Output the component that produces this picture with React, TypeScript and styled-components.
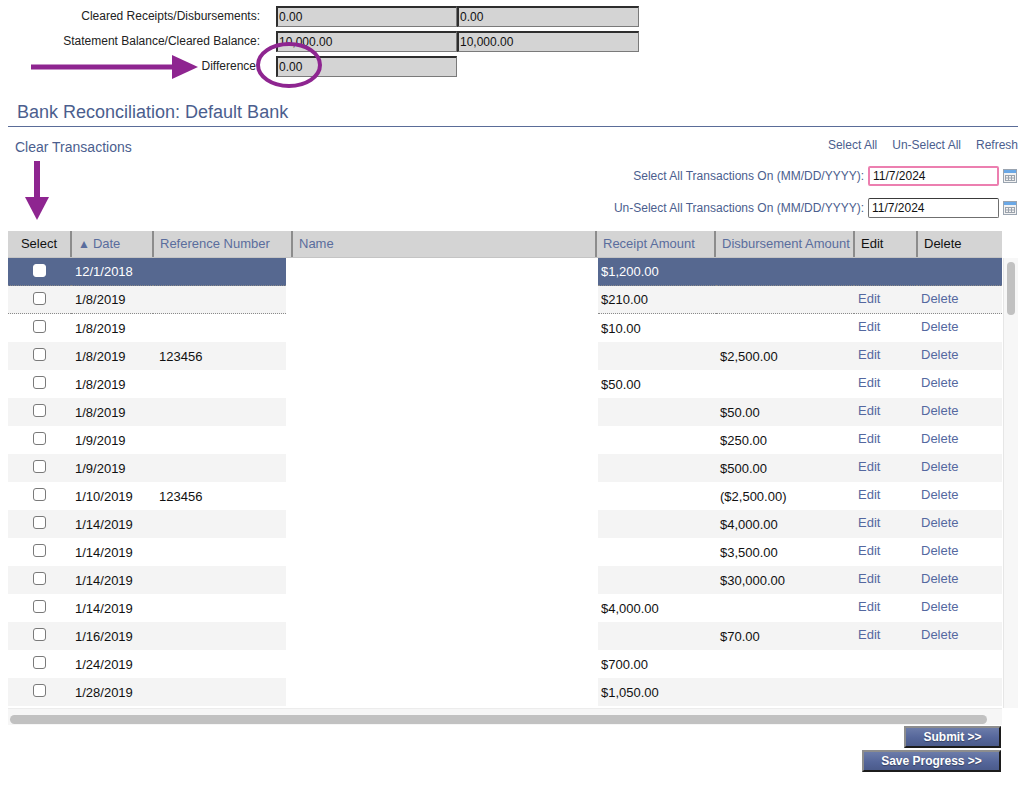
import styled, { createGlobalStyle } from "styled-components";

type Txn = {
  date: string;
  ref?: string;
  receipt?: string;
  disb?: string;
  actions?: boolean;
};

const rows: Txn[] = [
  { date: "12/1/2018", receipt: "$1,200.00" },
  { date: "1/8/2019", receipt: "$210.00", actions: true },
  { date: "1/8/2019", receipt: "$10.00", actions: true },
  { date: "1/8/2019", ref: "123456", disb: "$2,500.00", actions: true },
  { date: "1/8/2019", receipt: "$50.00", actions: true },
  { date: "1/8/2019", disb: "$50.00", actions: true },
  { date: "1/9/2019", disb: "$250.00", actions: true },
  { date: "1/9/2019", disb: "$500.00", actions: true },
  { date: "1/10/2019", ref: "123456", disb: "($2,500.00)", actions: true },
  { date: "1/14/2019", disb: "$4,000.00", actions: true },
  { date: "1/14/2019", disb: "$3,500.00", actions: true },
  { date: "1/14/2019", disb: "$30,000.00", actions: true },
  { date: "1/14/2019", receipt: "$4,000.00", actions: true },
  { date: "1/16/2019", disb: "$70.00", actions: true },
  { date: "1/24/2019", receipt: "$700.00" },
  { date: "1/28/2019", receipt: "$1,050.00" },
];

const GlobalStyle = createGlobalStyle`
  body {
    margin: 0;
    background: #ffffff;
    font-family: "Liberation Sans", Arial, sans-serif;
    font-size: 12px;
    color: #111;
  }
`;

const Page = styled.div`
  position: relative;
  width: 1010px;
  padding: 6px 6px 0 8px;
`;

// Summary (top fields)
const Summary = styled.div`
  display: grid;
  grid-template-columns: 268px 181px 182px;
  row-gap: 4px;
`;

const SummaryLabel = styled.div<{ $pad?: number }>`
  text-align: right;
  padding-right: ${(p) => p.$pad ?? 16}px;
  line-height: 21px;
  font-size: 12px;
  color: #222;
`;

const Field = styled.div`
  box-sizing: border-box;
  height: 21px;
  background: #d4d4d4;
  border: 1px solid #7a7a7a;
  border-top: 2px solid #2e2e2e;
  border-left: 2px solid #2e2e2e;
  padding-left: 1px;
  line-height: 18px;
  font-size: 12px;
  color: #111;
`;

const Heading = styled.h2`
  margin: 23px 0 0 0;
  padding: 1px 0 3px 9px;
  font-size: 18px;
  font-weight: normal;
  line-height: 22px;
  color: #4b5e8e;
  border-bottom: 1px solid #5a6c98;
`;

// Toolbar
const Toolbar = styled.div`
  display: flex;
  justify-content: space-between;
  align-items: flex-start;
`;

const SectionTitle = styled.div`
  padding: 12px 0 0 7px;
  font-size: 14px;
  line-height: 16px;
  color: #4b5e8e;
`;

const ToolActions = styled.div`
  display: flex;
  flex-direction: column;
  align-items: flex-end;
  padding-top: 11px;
`;

const Links = styled.div`
  display: flex;
  gap: 15px;
  line-height: 14px;
  margin-bottom: 14px;
`;

const Link = styled.a`
  color: #4b5e8e;
  font-size: 12px;
  text-decoration: none;
  cursor: pointer;
`;

const DateRow = styled.div`
  display: flex;
  align-items: center;
  height: 20px;
  margin-bottom: 12px;
  padding-right: 1px;
`;

const DateLabel = styled.span`
  color: #4b5e8e;
  font-size: 12px;
  margin-right: 4px;
`;

const DateInput = styled.div<{ $focused?: boolean }>`
  box-sizing: border-box;
  width: 131px;
  height: 20px;
  padding-left: 3px;
  line-height: ${(p) => (p.$focused ? "16px" : "18px")};
  font-size: 12px;
  color: #111;
  border-radius: 2px;
  border: ${(p) => (p.$focused ? "2px solid #ec7fb0" : "1px solid #6f6f6f")};
  border-top-color: ${(p) => (p.$focused ? "#ec7fb0" : "#3a3a3a")};
`;

const CalButton = styled.span`
  display: inline-flex;
  margin-left: 4px;
`;

// Grid
const Grid = styled.div`
  margin-top: 1px;
`;

const HeaderRow = styled.div`
  display: grid;
  grid-template-columns: 62px 82px 139px 304px 119px 139px 63px 86px;
  width: 994px;
  height: 27px;
  background: #d4d4d4;
  border-bottom: 1px solid #c4c4c4;
  box-sizing: border-box;
`;

const HeadCell = styled.div<{ $sortable?: boolean; $first?: boolean; $center?: boolean }>`
  font-size: 13px;
  line-height: 26px;
  white-space: nowrap;
  overflow: hidden;
  color: ${(p) => (p.$sortable ? "#5a6d9d" : "#111")};
  border-left: ${(p) => (p.$first ? "none" : "2px solid #8c8c8c")};
  padding-left: ${(p) => (p.$center ? "0" : "6px")};
  text-align: ${(p) => (p.$center ? "center" : "left")};
`;

const Arrow = styled.span`
  font-size: 12px;
  margin-right: 3px;
`;

const BodyWrap = styled.div`
  display: flex;
  gap: 1px;
  height: 450px;
  overflow: hidden;
`;

const Rows = styled.div`
  width: 994px;
`;

const Row = styled.div`
  display: grid;
  grid-template-columns: 63px 82px 133px 312px 118px 138px 63px 85px;
  height: 28px;
`;

const Cell = styled.div<{ $tone: "sel" | "alt" | "plain"; $dotted?: boolean; $blank?: boolean; $pad?: number }>`
  box-sizing: border-box;
  display: flex;
  align-items: center;
  font-size: 13px;
  white-space: nowrap;
  padding-left: ${(p) => p.$pad ?? 4}px;
  background: ${(p) =>
    p.$blank ? "#fff" : p.$tone === "sel" ? "#566890" : p.$tone === "alt" ? "#f4f4f4" : "#fff"};
  color: ${(p) => (p.$tone === "sel" ? "#fff" : "#111")};
  border-bottom: ${(p) => (p.$dotted && !p.$blank ? "1px dotted #8a8a8a" : "none")};
`;

const CheckCell = styled(Cell)`
  justify-content: center;
  padding-left: 0;
`;

const Check = styled.span<{ $sel?: boolean }>`
  box-sizing: border-box;
  width: 13px;
  height: 13px;
  border-radius: 3px;
  background: #fff;
  border: 1px solid ${(p) => (p.$sel ? "#fff" : "#7a7a7a")};
  margin-top: -3px;
`;

const RowLink = styled.a`
  color: #5468a0;
  font-size: 13px;
  cursor: pointer;
  margin-top: -3px;
`;

const VScroll = styled.div`
  width: 15px;
  background: #f7f7f7;
  border-left: 1px solid #e6e6e6;
  padding: 4px 0 0 3px;
  box-sizing: border-box;
`;

const VThumb = styled.div`
  width: 8px;
  height: 53px;
  border-radius: 4px;
  background: #c1c1c1;
`;

const HScroll = styled.div`
  width: 994px;
  height: 17px;
  background: #f6f6f6;
  border-top: 1px solid #ececec;
  box-sizing: border-box;
  padding: 6px 0 0 2px;
`;

const HThumb = styled.div`
  width: 977px;
  height: 9px;
  border-radius: 5px;
  background: #c1c1c1;
`;

// Buttons
const Actions = styled.div`
  display: flex;
  flex-direction: column;
  align-items: flex-end;
  gap: 2px;
  margin: 1px 17px 0 0;
`;

const Button = styled.button<{ $w: number }>`
  width: ${(p) => p.$w}px;
  height: 22px;
  padding: 0;
  font-family: "Liberation Sans", Arial, sans-serif;
  font-size: 12px;
  font-weight: bold;
  color: #fff;
  text-shadow: 0 1px 1px rgba(0, 0, 0, 0.35);
  background: linear-gradient(#6c7ca9, #55669a 55%, #4b5b8b);
  border: 2px solid;
  border-color: #8d8d8d #1c1c1c #1c1c1c #8d8d8d;
  cursor: pointer;
`;

// Annotation layer drawn over the page
const Annotations = styled.svg`
  position: absolute;
  left: 0;
  top: 0;
  pointer-events: none;
`;

function CalendarIcon() {
  return (
    <svg width="14" height="14" viewBox="0 0 14 14">
      <rect x="0.5" y="0.5" width="13" height="13" fill="#f2f2f2" stroke="#9aa4b0" />
      <rect x="1" y="1" width="12" height="3" fill="#6aa8e6" />
      <g stroke="#9ba3ad" strokeWidth="1" fill="none">
        <rect x="2.5" y="6.5" width="9" height="5" />
        <line x1="5.5" y1="6.5" x2="5.5" y2="11.5" />
        <line x1="8.5" y1="6.5" x2="8.5" y2="11.5" />
        <line x1="2.5" y1="9" x2="11.5" y2="9" />
      </g>
    </svg>
  );
}

export default function App() {
  return (
    <Page>
      <GlobalStyle />
      <Summary>
        <SummaryLabel>Cleared Receipts/Disbursements:</SummaryLabel>
        <Field>0.00</Field>
        <Field>0.00</Field>
        <SummaryLabel>Statement Balance/Cleared Balance:</SummaryLabel>
        <Field>10,000.00</Field>
        <Field>10,000.00</Field>
        <SummaryLabel $pad={20}>Difference</SummaryLabel>
        <Field>0.00</Field>
      </Summary>

      <Heading>Bank Reconciliation: Default Bank</Heading>

      <Toolbar>
        <SectionTitle>Clear Transactions</SectionTitle>
        <ToolActions>
          <Links>
            <Link>Select All</Link>
            <Link>Un-Select All</Link>
            <Link>Refresh</Link>
          </Links>
          <DateRow>
            <DateLabel>Select All Transactions On (MM/DD/YYYY):</DateLabel>
            <DateInput $focused>11/7/2024</DateInput>
            <CalButton>
              <CalendarIcon />
            </CalButton>
          </DateRow>
          <DateRow>
            <DateLabel>Un-Select All Transactions On (MM/DD/YYYY):</DateLabel>
            <DateInput>11/7/2024</DateInput>
            <CalButton>
              <CalendarIcon />
            </CalButton>
          </DateRow>
        </ToolActions>
      </Toolbar>

      <Grid>
        <HeaderRow>
          <HeadCell $first $center>Select</HeadCell>
          <HeadCell $sortable>
            <Arrow>▲</Arrow>Date
          </HeadCell>
          <HeadCell $sortable>Reference Number</HeadCell>
          <HeadCell $sortable>Name</HeadCell>
          <HeadCell $sortable>Receipt Amount</HeadCell>
          <HeadCell $sortable>Disbursement Amount</HeadCell>
          <HeadCell>Edit</HeadCell>
          <HeadCell>Delete</HeadCell>
        </HeaderRow>
        <BodyWrap>
          <Rows>
            {rows.map((r, i) => {
              const tone = i === 0 ? "sel" : i % 2 === 1 ? "alt" : "plain";
              const dotted = i < 2;
              return (
                <Row key={i}>
                  <CheckCell $tone={tone} $dotted={dotted}>
                    <Check $sel={i === 0} />
                  </CheckCell>
                  <Cell $tone={tone} $dotted={dotted}>{r.date}</Cell>
                  <Cell $tone={tone} $dotted={dotted} $pad={6}>{r.ref}</Cell>
                  <Cell $tone={tone} $blank />
                  <Cell $tone={tone} $dotted={dotted} $pad={3}>{r.receipt}</Cell>
                  <Cell $tone={tone} $dotted={dotted}>{r.disb}</Cell>
                  <Cell $tone={tone} $dotted={dotted}>
                    {r.actions && <RowLink>Edit</RowLink>}
                  </Cell>
                  <Cell $tone={tone} $dotted={dotted}>
                    {r.actions && <RowLink>Delete</RowLink>}
                  </Cell>
                </Row>
              );
            })}
          </Rows>
          <VScroll>
            <VThumb />
          </VScroll>
        </BodyWrap>
        <HScroll>
          <HThumb />
        </HScroll>
      </Grid>

      <Actions>
        <Button $w={97}>Submit &gt;&gt;</Button>
        <Button $w={139}>Save Progress &gt;&gt;</Button>
      </Actions>

      <Annotations width="1024" height="240" viewBox="0 0 1024 240">
        <g fill="#8e2590" stroke="none">
          <rect x="31" y="64.5" width="145" height="5" />
          <polygon points="172,55 198,67 172,79" />
          <rect x="34" y="161" width="6" height="38" />
          <polygon points="25,197 49,197 37,220" />
        </g>
        <ellipse cx="289" cy="65" rx="31" ry="21" fill="none" stroke="#8e2590" strokeWidth="4" />
      </Annotations>
    </Page>
  );
}
